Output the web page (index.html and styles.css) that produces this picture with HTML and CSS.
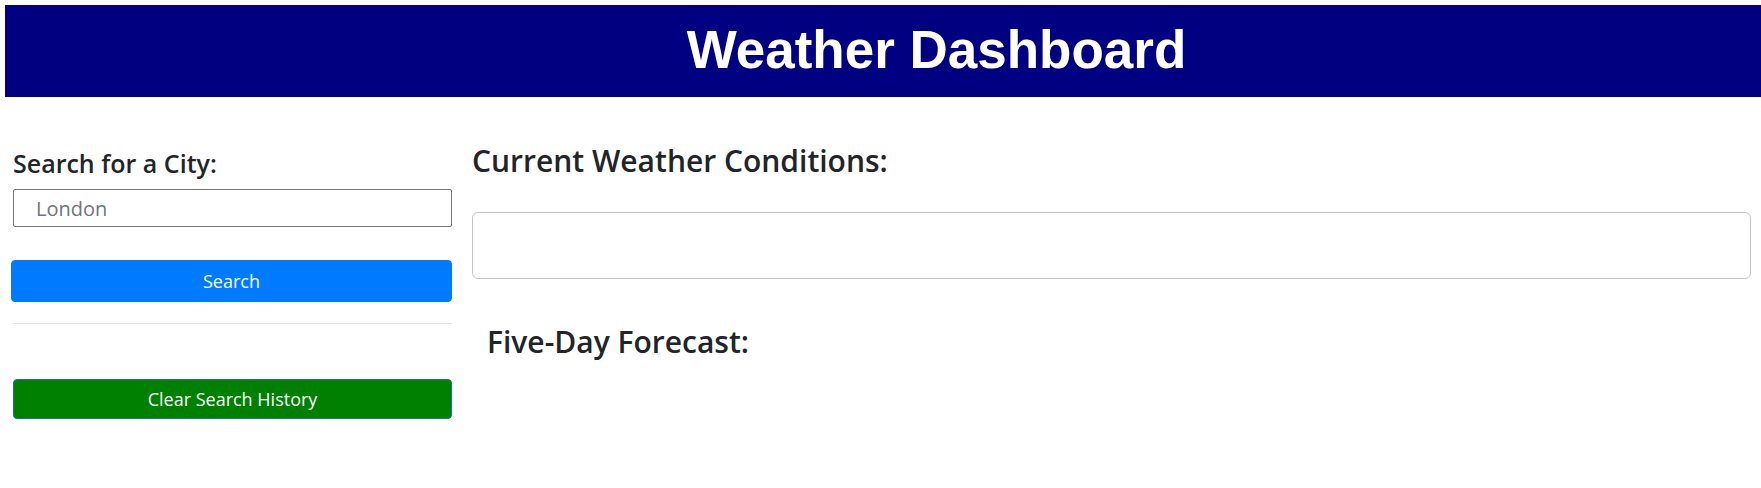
FILE: index.html
```html
<!DOCTYPE html>
<html lang="en">
<head>
<meta charset="utf-8">
<title>Weather Dashboard</title>
<link rel="stylesheet" href="styles.css">
</head>
<body>
<header class="site-header">
  <h1 class="site-title">Weather Dashboard</h1>
</header>
<main class="layout">
  <aside class="sidebar">
    <h4 class="search-label">Search for a City:</h4>
    <input class="city-input" type="text" placeholder="London">
    <button class="btn btn-search">Search</button>
    <hr class="divider">
    <button class="btn btn-clear">Clear Search History</button>
  </aside>
  <section class="content">
    <h3 class="section-title">Current Weather Conditions:</h3>
    <div class="current-box"></div>
    <h3 class="section-title forecast-title">Five-Day Forecast:</h3>
  </section>
</main>
</body>
</html>
```
FILE: styles.css
```css
* { box-sizing: border-box; }
html, body { margin: 0; padding: 0; background: #fff; }
body {
  font-family: "Open Sans", "Noto Sans", sans-serif;
  font-size: 16px;
  color: #212529;
  padding: 5px 0 0 5px;
}
.site-header {
  height: 92px;
  background: #000080;
  display: flex;
  align-items: center;
  justify-content: center;
  padding: 0 0 4px 107px;
}
.site-title {
  margin: 0;
  font-family: "Liberation Sans", Arial, sans-serif;
  font-weight: 700;
  font-size: 53px;
  line-height: normal;
  color: #fff;
}
.layout {
  display: grid;
  grid-template-columns: 441px 1fr;
  column-gap: 20px;
  padding: 0 10px 0 6px;
}
.sidebar {
  display: flex;
  flex-direction: column;
  padding-top: 51px;
}
.search-label {
  margin: 0 0 11px 2px;
  font-size: 25px;
  font-weight: 600;
  line-height: 1.2;
}
.city-input {
  margin-left: 2px;
  height: 38px;
  border: 1px solid #767676;
  border-radius: 2px;
  padding: 0 0 0 22px;
  font-family: inherit;
  font-size: 20px;
  color: #495057;
}
.city-input::placeholder { color: #6c757d; }
.btn {
  font-family: inherit;
  font-size: 18px;
  color: #fff;
  border-radius: 4px;
  cursor: pointer;
  padding: 0;
}
.btn-search {
  margin-top: 33px;
  height: 42px;
  background: #007bff;
  border: 1px solid #007bff;
}
.divider {
  margin: 21px 0 0 2px;
  border: 0;
  border-top: 1px solid #e5e5e5;
  height: 0;
}
.btn-clear {
  margin: 55px 0 0 2px;
  height: 40px;
  background: #008000;
  border: 1px solid #177a8a;
}
.content {
  padding-top: 46px;
}
.section-title {
  margin: 0;
  font-size: 30px;
  font-weight: 600;
  line-height: 1.2;
}
.current-box {
  margin-top: 33px;
  height: 67px;
  border: 1px solid #c4c4c4;
  border-radius: 6px;
}
.forecast-title {
  margin-top: 45px;
  padding-left: 15px;
}
```
